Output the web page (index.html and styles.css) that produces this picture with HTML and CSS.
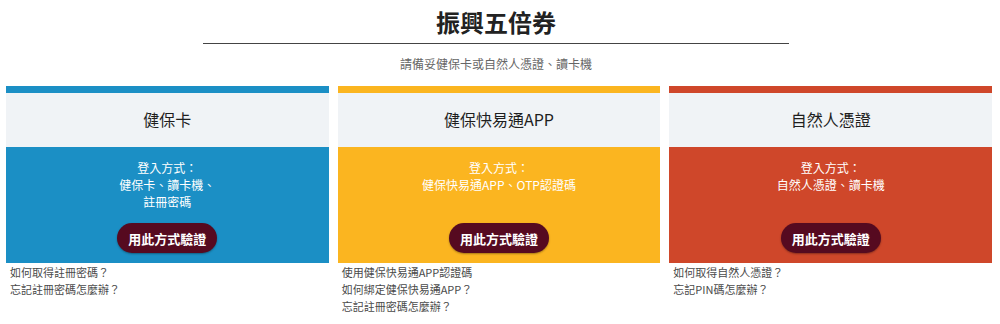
FILE: index.html
```html
<!DOCTYPE html>
<html lang="zh-Hant">
<head>
<meta charset="utf-8">
<title>振興五倍券</title>
<link rel="stylesheet" href="styles.css">
</head>
<body>
<header class="page-head">
  <h1 class="title">振興五倍券</h1>
  <div class="rule"></div>
  <p class="subtitle">請備妥健保卡或自然人憑證、讀卡機</p>
</header>
<main class="cards">
  <section class="card card-blue">
    <div class="card-head">健保卡</div>
    <div class="card-body">
      <p class="method">登入方式：<br>健保卡、讀卡機、<br>註冊密碼</p>
      <button class="verify">用此方式驗證</button>
    </div>
    <ul class="links">
      <li>如何取得註冊密碼？</li>
      <li>忘記註冊密碼怎麼辦？</li>
    </ul>
  </section>
  <section class="card card-yellow">
    <div class="card-head">健保快易通APP</div>
    <div class="card-body">
      <p class="method">登入方式：<br>健保快易通APP、OTP認證碼</p>
      <button class="verify">用此方式驗證</button>
    </div>
    <ul class="links">
      <li>使用健保快易通APP認證碼</li>
      <li>如何綁定健保快易通APP？</li>
      <li>忘記註冊密碼怎麼辦？</li>
    </ul>
  </section>
  <section class="card card-red">
    <div class="card-head">自然人憑證</div>
    <div class="card-body">
      <p class="method">登入方式：<br>自然人憑證、讀卡機</p>
      <button class="verify">用此方式驗證</button>
    </div>
    <ul class="links">
      <li>如何取得自然人憑證？</li>
      <li>忘記PIN碼怎麼辦？</li>
    </ul>
  </section>
</main>
</body>
</html>
```
FILE: styles.css
```css
* { box-sizing: border-box; }
html, body { margin: 0; padding: 0; background: #fff; }
body {
  font-family: "Noto Sans CJK TC", "Noto Sans", "Liberation Sans", sans-serif;
  color: #222;
}
.page-head {
  display: flex;
  flex-direction: column;
  align-items: center;
  padding: 6px 8px 0 0;
}
.title {
  margin: 0;
  font-size: 24px;
  line-height: 32px;
  font-weight: 700;
  color: #222;
}
.rule {
  width: 586px;
  height: 1px;
  background: #444;
  margin-top: 5px;
}
.subtitle {
  margin: 11px 0 0;
  font-size: 12px;
  line-height: 17px;
  color: #666;
}
.cards {
  display: grid;
  grid-template-columns: repeat(3, 1fr);
  gap: 9px;
  padding: 14px 8px 0 6px;
}
.card { display: flex; flex-direction: column; }
.card-head {
  height: 61px;
  background: #f0f3f6;
  border-top: 7px solid;
  display: flex;
  align-items: center;
  justify-content: center;
  font-size: 16px;
  color: #1e1e1e;
  padding-bottom: 2px;
}
.card-body {
  height: 116px;
  display: flex;
  flex-direction: column;
  align-items: center;
  justify-content: space-between;
  padding: 12px 0 10px;
  color: #fff;
}
.method {
  margin: 0;
  text-align: center;
  font-size: 12px;
  line-height: 17px;
}
.verify {
  font-family: inherit;
  height: 30px;
  padding: 0 11px;
  border: none;
  border-radius: 15px;
  background: #560a20;
  color: #fff;
  font-size: 13px;
  font-weight: 700;
  box-shadow: 0 1px 2px rgba(0,0,0,0.35);
}
.card-blue .card-head { border-top-color: #1b8fc5; }
.card-blue .card-body { background: #1b8fc5; }
.card-yellow .card-head { border-top-color: #fbb520; }
.card-yellow .card-body { background: #fbb520; }
.card-red .card-head { border-top-color: #cf472a; }
.card-red .card-body { background: #cf472a; }
.links {
  list-style: none;
  margin: 0;
  padding: 1px 0 0 4px;
  font-size: 11px;
  line-height: 17px;
  color: #4a4a4a;
}
```
